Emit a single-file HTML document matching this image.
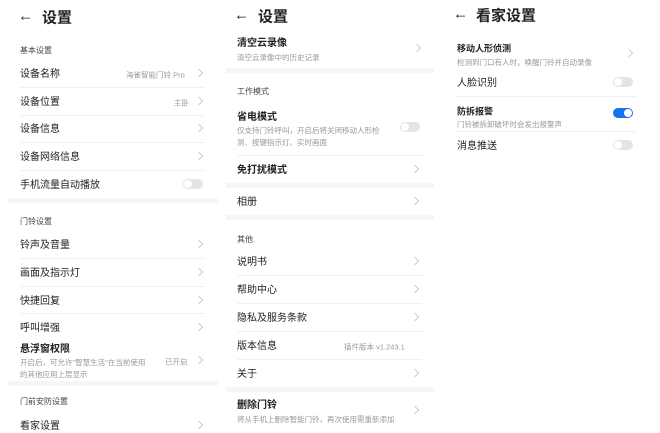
<!DOCTYPE html><html><head><meta charset="utf-8"><style>
body{margin:0;width:660px;height:433px;background:#fff;position:relative;overflow:hidden;font-family:"Liberation Sans","Noto Sans CJK SC",sans-serif;color:#222}
.t{position:absolute;line-height:1;transform:translateY(-50%);white-space:nowrap;margin-top:1.5px}
.h{font-size:15px;font-weight:bold;color:#222}
.s{font-size:8px;color:#444}
.r{font-size:10px;color:#222}
.b{font-size:10px;font-weight:bold;color:#222}
.sub{font-size:7.5px;color:#999;line-height:12px;transform:none}
.v{font-size:7.5px;color:#999}
.chev{position:absolute;width:5px;height:5px;border-top:1px solid #ccc;border-right:1px solid #ccc;transform:translateY(-50%) rotate(45deg)}
.line{position:absolute;height:1px;background:#f0f0f0}
.band{position:absolute;height:5px;background:#f6f6f6}
.tog{position:absolute;width:20px;height:10px;border-radius:5px;background:#e4e4e4;transform:translateY(-50%)}
.tog::after{content:"";position:absolute;left:1px;top:1px;width:8px;height:8px;border-radius:50%;background:#fff}
.tog.on{background:#1672ee}.tog.on::after{left:11px}
.arr{position:absolute;font-size:15px;line-height:1;transform:translateY(-50%)}
</style></head><body>
<!-- panel 1 -->
<div class="arr" style="left:18px;top:16px">←</div>
<div class="t h" style="left:42px;top:16px">设置</div>
<div class="t s" style="left:20px;top:49px">基本设置</div>
<div class="t r" style="left:20px;top:73px">设备名称</div><div class="t v" style="left:126px;top:73px">海雀智能门铃 Pro</div><div class="chev" style="left:196px;top:73px"></div>
<div class="line" style="left:20px;width:185px;top:87px"></div>
<div class="t r" style="left:20px;top:101px">设备位置</div><div class="t v" style="left:174px;top:101px">主卧</div><div class="chev" style="left:196px;top:101px"></div>
<div class="line" style="left:20px;width:185px;top:115px"></div>
<div class="t r" style="left:20px;top:128px">设备信息</div><div class="chev" style="left:196px;top:128px"></div>
<div class="line" style="left:20px;width:185px;top:142px"></div>
<div class="t r" style="left:20px;top:156px">设备网络信息</div><div class="chev" style="left:196px;top:156px"></div>
<div class="line" style="left:20px;width:185px;top:170px"></div>
<div class="t r" style="left:20px;top:184px">手机流量自动播放</div><div class="tog" style="left:183px;top:184px"></div>
<div class="band" style="left:8px;width:210px;top:198px"></div>
<div class="t s" style="left:20px;top:220px">门铃设置</div>
<div class="t r" style="left:20px;top:244px">铃声及音量</div><div class="chev" style="left:196px;top:244px"></div>
<div class="line" style="left:20px;width:185px;top:258px"></div>
<div class="t r" style="left:20px;top:272px">画面及指示灯</div><div class="chev" style="left:196px;top:272px"></div>
<div class="line" style="left:20px;width:185px;top:286px"></div>
<div class="t r" style="left:20px;top:300px">快捷回复</div><div class="chev" style="left:196px;top:300px"></div>
<div class="line" style="left:20px;width:185px;top:313px"></div>
<div class="t r" style="left:20px;top:327px">呼叫增强</div><div class="chev" style="left:196px;top:327px"></div>
<div class="t b" style="left:20px;top:348px">悬浮窗权限</div>
<div class="t sub" style="left:20px;top:355px">开启后，可允许"智慧生活"在当前使用<br>的其他应用上层显示</div>
<div class="t v" style="left:165px;top:360px">已开启</div><div class="chev" style="left:196px;top:360px"></div>
<div class="band" style="left:8px;width:210px;top:381px"></div>
<div class="t s" style="left:20px;top:400px">门前安防设置</div>
<div class="t r" style="left:20px;top:425px">看家设置</div><div class="chev" style="left:196px;top:425px"></div>
<!-- panel 2 -->
<div class="arr" style="left:234px;top:15px">←</div>
<div class="t h" style="left:258px;top:15px">设置</div>
<div class="t b" style="left:237px;top:42px">清空云录像</div>
<div class="t sub" style="left:237px;top:50px">清空云录像中的历史记录</div><div class="chev" style="left:414px;top:48px"></div>
<div class="band" style="left:226px;width:208px;top:68px"></div>
<div class="t s" style="left:237px;top:90px">工作模式</div>
<div class="t b" style="left:237px;top:116px">省电模式</div>
<div class="t sub" style="left:237px;top:123px">仅支持门铃呼叫，开启后将关闭移动人形检<br>测、按键指示灯、实时画面</div>
<div class="tog" style="left:400px;top:127px"></div>
<div class="line" style="left:237px;width:185px;top:155px"></div>
<div class="t b" style="left:237px;top:169px">免打扰模式</div><div class="chev" style="left:412px;top:169px"></div>
<div class="band" style="left:226px;width:208px;top:183px"></div>
<div class="t r" style="left:237px;top:201px">相册</div><div class="chev" style="left:412px;top:201px"></div>
<div class="band" style="left:226px;width:208px;top:215px"></div>
<div class="t s" style="left:237px;top:238px">其他</div>
<div class="t r" style="left:237px;top:261px">说明书</div><div class="chev" style="left:412px;top:261px"></div>
<div class="line" style="left:237px;width:185px;top:275px"></div>
<div class="t r" style="left:237px;top:289px">帮助中心</div><div class="chev" style="left:412px;top:289px"></div>
<div class="line" style="left:237px;width:185px;top:303px"></div>
<div class="t r" style="left:237px;top:317px">隐私及服务条款</div><div class="chev" style="left:412px;top:317px"></div>
<div class="line" style="left:237px;width:185px;top:331px"></div>
<div class="t r" style="left:237px;top:345px">版本信息</div><div class="t v" style="left:344px;top:345px">插件版本 v1.243.1</div>
<div class="line" style="left:237px;width:185px;top:359px"></div>
<div class="t r" style="left:237px;top:373px">关于</div><div class="chev" style="left:412px;top:373px"></div>
<div class="band" style="left:226px;width:208px;top:387px"></div>
<div class="t b" style="left:237px;top:404px">删除门铃</div>
<div class="t sub" style="left:237px;top:412px">将从手机上删除智能门铃，再次使用需重新添加</div><div class="chev" style="left:412px;top:410px"></div>
<!-- panel 3 -->
<div class="arr" style="left:453px;top:14px">←</div>
<div class="t h" style="left:476px;top:14px">看家设置</div>
<div class="t b" style="left:457px;top:47px;font-size:9px">移动人形侦测</div>
<div class="t sub" style="left:457px;top:55px">检测到门口有人时，唤醒门铃并自动录像</div><div class="chev" style="left:626px;top:53px"></div>
<div class="t r" style="left:457px;top:82px">人脸识别</div><div class="tog" style="left:613px;top:82px"></div>
<div class="line" style="left:457px;width:180px;top:96px"></div>
<div class="t b" style="left:457px;top:110px;font-size:9px">防拆报警</div>
<div class="t sub" style="left:457px;top:117px">门铃被拆卸破坏时会发出报警声</div>
<div class="tog on" style="left:613px;top:113px"></div>
<div class="line" style="left:457px;width:180px;top:131px"></div>
<div class="t r" style="left:457px;top:145px">消息推送</div><div class="tog" style="left:613px;top:145px"></div>
</body></html>
